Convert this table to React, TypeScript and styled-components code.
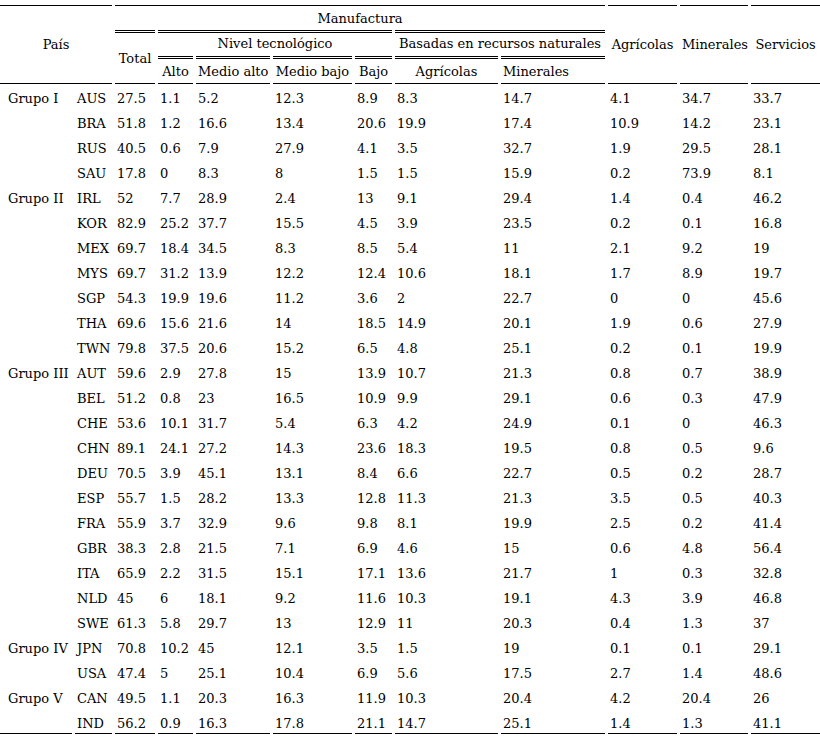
import { createGlobalStyle, styled } from "styled-components";

type Row = [string, ...number[]];

interface Group {
  name: string;
  rows: Row[];
}

const groups: Group[] = [
  {
    name: "Grupo I",
    rows: [
      ["AUS", 27.5, 1.1, 5.2, 12.3, 8.9, 8.3, 14.7, 4.1, 34.7, 33.7],
      ["BRA", 51.8, 1.2, 16.6, 13.4, 20.6, 19.9, 17.4, 10.9, 14.2, 23.1],
      ["RUS", 40.5, 0.6, 7.9, 27.9, 4.1, 3.5, 32.7, 1.9, 29.5, 28.1],
      ["SAU", 17.8, 0, 8.3, 8, 1.5, 1.5, 15.9, 0.2, 73.9, 8.1],
    ],
  },
  {
    name: "Grupo II",
    rows: [
      ["IRL", 52, 7.7, 28.9, 2.4, 13, 9.1, 29.4, 1.4, 0.4, 46.2],
      ["KOR", 82.9, 25.2, 37.7, 15.5, 4.5, 3.9, 23.5, 0.2, 0.1, 16.8],
      ["MEX", 69.7, 18.4, 34.5, 8.3, 8.5, 5.4, 11, 2.1, 9.2, 19],
      ["MYS", 69.7, 31.2, 13.9, 12.2, 12.4, 10.6, 18.1, 1.7, 8.9, 19.7],
      ["SGP", 54.3, 19.9, 19.6, 11.2, 3.6, 2, 22.7, 0, 0, 45.6],
      ["THA", 69.6, 15.6, 21.6, 14, 18.5, 14.9, 20.1, 1.9, 0.6, 27.9],
      ["TWN", 79.8, 37.5, 20.6, 15.2, 6.5, 4.8, 25.1, 0.2, 0.1, 19.9],
    ],
  },
  {
    name: "Grupo III",
    rows: [
      ["AUT", 59.6, 2.9, 27.8, 15, 13.9, 10.7, 21.3, 0.8, 0.7, 38.9],
      ["BEL", 51.2, 0.8, 23, 16.5, 10.9, 9.9, 29.1, 0.6, 0.3, 47.9],
      ["CHE", 53.6, 10.1, 31.7, 5.4, 6.3, 4.2, 24.9, 0.1, 0, 46.3],
      ["CHN", 89.1, 24.1, 27.2, 14.3, 23.6, 18.3, 19.5, 0.8, 0.5, 9.6],
      ["DEU", 70.5, 3.9, 45.1, 13.1, 8.4, 6.6, 22.7, 0.5, 0.2, 28.7],
      ["ESP", 55.7, 1.5, 28.2, 13.3, 12.8, 11.3, 21.3, 3.5, 0.5, 40.3],
      ["FRA", 55.9, 3.7, 32.9, 9.6, 9.8, 8.1, 19.9, 2.5, 0.2, 41.4],
      ["GBR", 38.3, 2.8, 21.5, 7.1, 6.9, 4.6, 15, 0.6, 4.8, 56.4],
      ["ITA", 65.9, 2.2, 31.5, 15.1, 17.1, 13.6, 21.7, 1, 0.3, 32.8],
      ["NLD", 45, 6, 18.1, 9.2, 11.6, 10.3, 19.1, 4.3, 3.9, 46.8],
      ["SWE", 61.3, 5.8, 29.7, 13, 12.9, 11, 20.3, 0.4, 1.3, 37],
    ],
  },
  {
    name: "Grupo IV",
    rows: [
      ["JPN", 70.8, 10.2, 45, 12.1, 3.5, 1.5, 19, 0.1, 0.1, 29.1],
      ["USA", 47.4, 5, 25.1, 10.4, 6.9, 5.6, 17.5, 2.7, 1.4, 48.6],
    ],
  },
  {
    name: "Grupo V",
    rows: [
      ["CAN", 49.5, 1.1, 20.3, 16.3, 11.9, 10.3, 20.4, 4.2, 20.4, 26],
      ["IND", 56.2, 0.9, 16.3, 17.8, 21.1, 14.7, 25.1, 1.4, 1.3, 41.1],
    ],
  },
];

// column widths, left to right
const widths = [72, 37, 40, 35, 74, 79, 37, 103, 104, 69, 68, 69];

const lastGroup = groups.length - 1;

const App = () => {
  return (
    <>
      <GlobalStyle />
      <Table>
        <colgroup>
          {widths.map((w, i) => (
            <Col key={i} $w={w} />
          ))}
        </colgroup>
        <thead>
          <HeadRow $h={25}>
            <HeadCell rowSpan={3} colSpan={2} $top="single" $bottom $middle>
              País
            </HeadCell>
            <HeadCell colSpan={7} $top="single" $pt={5}>
              Manufactura
            </HeadCell>
            <HeadCell rowSpan={3} $top="single" $bottom $middle>
              Agrícolas
            </HeadCell>
            <HeadCell rowSpan={3} $top="single" $bottom $middle>
              Minerales
            </HeadCell>
            <HeadCell rowSpan={3} $top="single" $bottom $middle>
              Servicios
            </HeadCell>
          </HeadRow>
          <HeadRow $h={26}>
            <HeadCell rowSpan={2} $top="double" $bottom $middle>
              Total
            </HeadCell>
            <HeadCell colSpan={4} $top="double" $pt={3}>
              Nivel tecnológico
            </HeadCell>
            <HeadCell colSpan={2} $top="double" $pt={3}>
              Basadas en recursos naturales
            </HeadCell>
          </HeadRow>
          <HeadRow $h={28}>
            <HeadCell $top="double" $bottom $pt={5}>Alto</HeadCell>
            <HeadCell $top="double" $bottom $pt={5}>Medio alto</HeadCell>
            <HeadCell $top="double" $bottom $pt={5}>Medio bajo</HeadCell>
            <HeadCell $top="double" $bottom $pt={5}>Bajo</HeadCell>
            <HeadCell $top="double" $bottom $pt={5}>Agrícolas</HeadCell>
            <HeadCell $top="double" $bottom $pt={5} $align="left">
              Minerales
            </HeadCell>
          </HeadRow>
        </thead>
        <tbody>
          {groups.map((g, gi) =>
            g.rows.map((row, ri) => {
              const last = gi === lastGroup && ri === g.rows.length - 1;
              return (
                <BodyRow key={row[0]}>
                  <GroupCell $last={last}>{ri === 0 ? g.name : ""}</GroupCell>
                  {row.map((v, ci) => (
                    <Cell key={ci} $last={last}>
                      {v}
                    </Cell>
                  ))}
                </BodyRow>
              );
            })
          )}
        </tbody>
      </Table>
    </>
  );
};

const GlobalStyle = createGlobalStyle`
  html, body {
    margin: 0;
    padding: 0;
    background: #fff;
    overflow: hidden;
  }
  body {
    font-family: "DejaVu Serif", "Liberation Serif", serif;
    font-size: 13px;
    color: #000;
  }
`;

const Table = styled.table`
  table-layout: fixed;
  width: 826px;
  margin: 5px 0 0 -3px;
  border-collapse: separate;
  border-spacing: 3px 0;
  font-family: "DejaVu Serif", "Liberation Serif", serif;
  font-size: 13px;
  line-height: 15px;
  color: #000;
`;

const Col = styled.col<{ $w: number }>`
  width: ${(p) => p.$w}px;
`;

const HeadRow = styled.tr<{ $h: number }>`
  height: ${(p) => p.$h}px;
`;

const HeadCell = styled.th<{
  $top?: "single" | "double";
  $bottom?: boolean;
  $middle?: boolean;
  $pt?: number;
  $align?: "left" | "center";
}>`
  font-weight: normal;
  white-space: nowrap;
  padding: ${(p) => (p.$middle ? 0 : p.$pt ?? 0)}px 2px 0 2px;
  text-align: ${(p) => p.$align ?? "center"};
  vertical-align: ${(p) => (p.$middle ? "middle" : "top")};
  border-top: ${(p) =>
    p.$top === "double" ? "3px double #000" : p.$top === "single" ? "1px solid #000" : "none"};
  border-bottom: ${(p) => (p.$bottom ? "1px solid #000" : "none")};
`;

const BodyRow = styled.tr`
  height: 25px;
`;

const Cell = styled.td<{ $last?: boolean }>`
  padding: 7px 2px 0 2px;
  vertical-align: top;
  text-align: left;
  white-space: nowrap;
  border-bottom: ${(p) => (p.$last ? "1px solid #000" : "none")};
`;

const GroupCell = styled(Cell)`
  padding-left: 8px;
`;

export default App;
